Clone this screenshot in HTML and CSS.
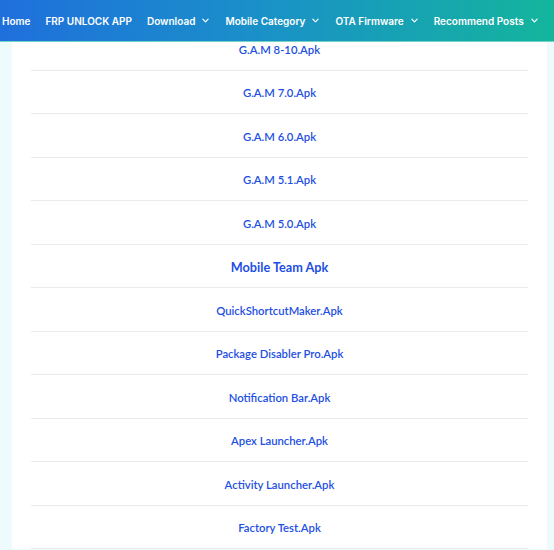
FILE: index.html
```html
<!DOCTYPE html>
<html>
<head>
<meta charset="utf-8">
<link rel="stylesheet" href="styles.css">
</head>
<body>
<nav class="topnav">
  <a class="nav-item">Home</a>
  <a class="nav-item">FRP UNLOCK APP</a>
  <a class="nav-item">Download<span class="chev"><svg viewBox="0 0 8 5" width="7" height="5"><path d="M1 1l3 3 3-3" fill="none" stroke="currentColor" stroke-width="1.4" stroke-linecap="round" stroke-linejoin="round"/></svg></span></a>
  <a class="nav-item">Mobile Category<span class="chev"><svg viewBox="0 0 8 5" width="7" height="5"><path d="M1 1l3 3 3-3" fill="none" stroke="currentColor" stroke-width="1.4" stroke-linecap="round" stroke-linejoin="round"/></svg></span></a>
  <a class="nav-item">OTA Firmware<span class="chev"><svg viewBox="0 0 8 5" width="7" height="5"><path d="M1 1l3 3 3-3" fill="none" stroke="currentColor" stroke-width="1.4" stroke-linecap="round" stroke-linejoin="round"/></svg></span></a>
  <a class="nav-item">Recommend Posts<span class="chev"><svg viewBox="0 0 8 5" width="7" height="5"><path d="M1 1l3 3 3-3" fill="none" stroke="currentColor" stroke-width="1.4" stroke-linecap="round" stroke-linejoin="round"/></svg></span></a>
</nav>
<main class="page">
  <div class="card">
    <ul class="list">
      <li class="row"><a>G.A.M 8-10.Apk</a></li>
      <li class="row"><a>G.A.M 7.0.Apk</a></li>
      <li class="row"><a>G.A.M 6.0.Apk</a></li>
      <li class="row"><a>G.A.M 5.1.Apk</a></li>
      <li class="row"><a>G.A.M 5.0.Apk</a></li>
      <li class="row heading"><a>Mobile Team Apk</a></li>
      <li class="row"><a>QuickShortcutMaker.Apk</a></li>
      <li class="row"><a>Package Disabler Pro.Apk</a></li>
      <li class="row"><a>Notification Bar.Apk</a></li>
      <li class="row"><a>Apex Launcher.Apk</a></li>
      <li class="row"><a>Activity Launcher.Apk</a></li>
      <li class="row"><a>Factory Test.Apk</a></li>
    </ul>
  </div>
</main>
</body>
</html>
```
FILE: styles.css
```css
html, body {
  margin: 0;
  padding: 0;
}
body {
  background: #eefbfd;
  font-family: "Lato", "Noto Sans", sans-serif;
  overflow: hidden;
}
.topnav {
  position: fixed;
  top: 0;
  left: 0;
  right: 0;
  height: 41px;
  display: flex;
  align-items: center;
  gap: 15px;
  padding-left: 2px;
  background: linear-gradient(90deg, #1f6fdc 0%, #1a8fc9 45%, #14b59d 100%);
  border-bottom: 1px solid #6fd3c8;
  font-family: "Inter", "Liberation Sans", sans-serif;
  font-weight: 600;
  font-size: 10px;
  color: #ffffff;
  z-index: 5;
  white-space: nowrap;
}
.nav-item {
  display: flex;
  align-items: center;
}
.chev {
  display: inline-flex;
  margin-left: 7px;
  margin-right: 1px;
}
.page {
  padding: 27px 7px 0 12px;
}
.card {
  background: #ffffff;
  padding: 0 19px;
}
.list {
  list-style: none;
  margin: 0;
  padding: 0;
}
.row {
  height: 43.5px;
  box-sizing: border-box;
  border-bottom: 1px solid #ebebeb;
  display: flex;
  align-items: center;
  justify-content: center;
  padding-top: 2px;
  font-size: 11.3px;
  font-weight: 600;
  color: #1d4fe2;
}
.row.heading {
  font-size: 12.7px;
  font-weight: 700;
}
```
